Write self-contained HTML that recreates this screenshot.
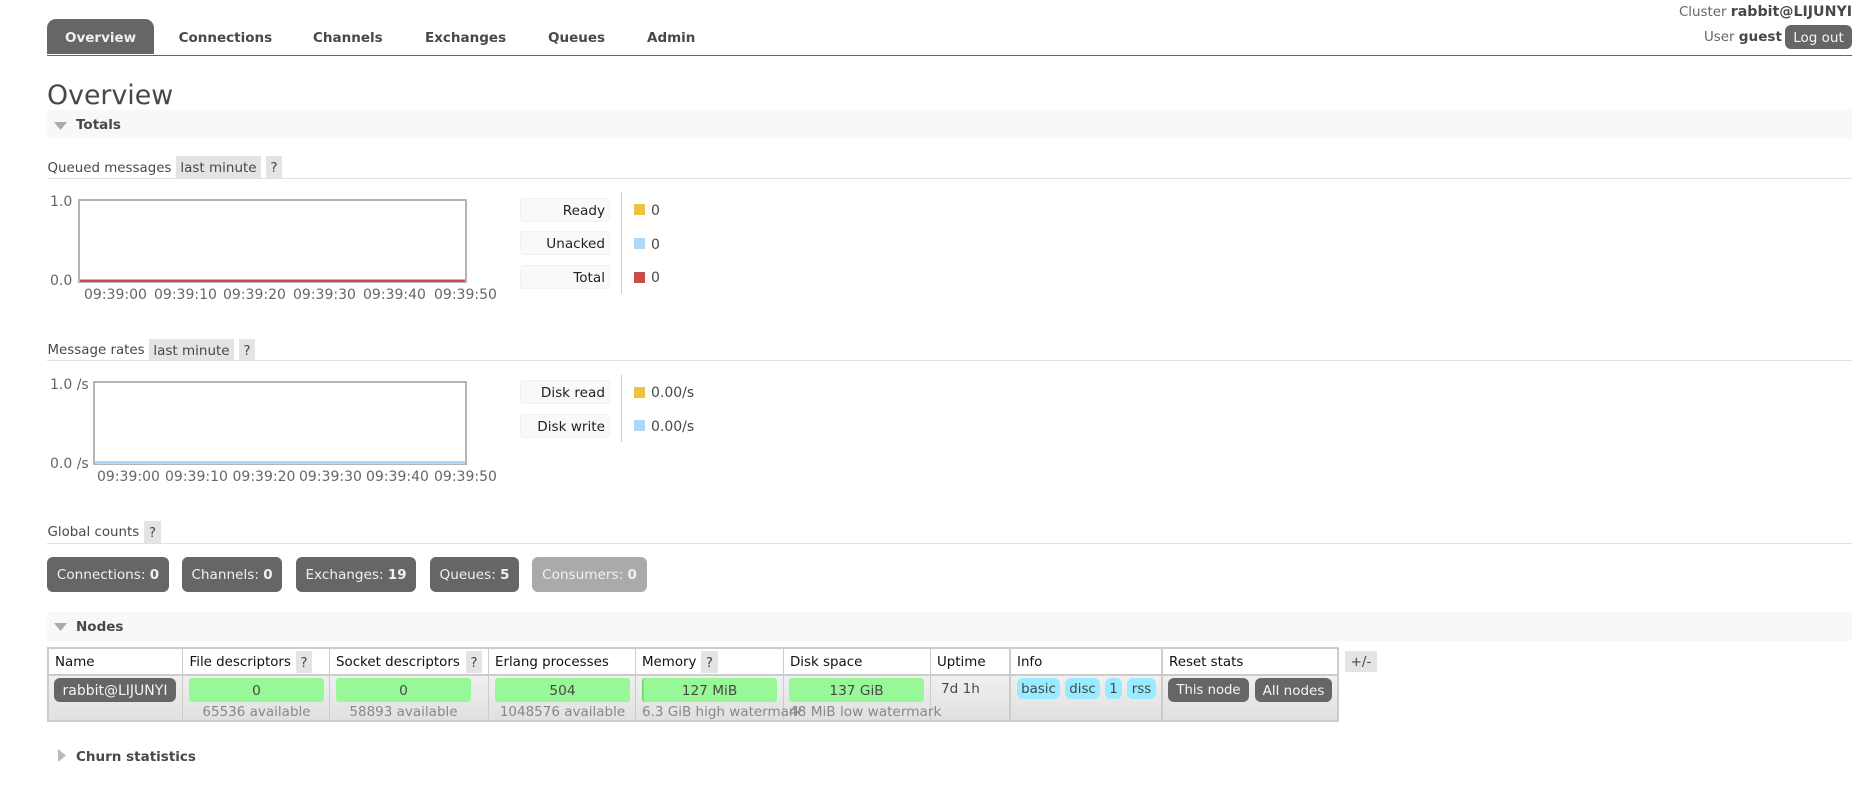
<!DOCTYPE html>
<html><head><meta charset="utf-8"><title>Overview</title>
<style>
html,body{margin:0;padding:0;background:#fff;width:1871px;height:785px;overflow:hidden}
body{position:relative;font-family:"DejaVu Sans","Liberation Sans",sans-serif;font-size:13.4px;color:#484848}
.t,.b,.c{position:absolute;white-space:nowrap}
.t{line-height:22px;height:22px}
.b{font-weight:bold;font-size:13.5px}
.t b{font-weight:bold;font-size:13.4px}
.box{position:absolute}
.chip{background:#e4e4e4;color:#484848;height:22px;line-height:24px;position:absolute;text-align:center;font-size:13.5px}
.leg{position:absolute;left:520px;width:85px;padding-right:5px;height:24px;line-height:26px;text-align:right;background:#f9f9f9;border-radius:3px;box-shadow:inset 0 0 0 1px #f1f1f1;color:#222;font-size:13.6px}
.sw{position:absolute;left:634px;width:11px;height:11px}
.bar{position:absolute;left:47px;width:1805px;background:#f8f8f8}
.btn{position:absolute;background:#666;color:#f4f4f4;border-radius:6px;text-align:center;height:24px;line-height:26px;font-size:13.5px}
.cnt{position:absolute;top:557px;height:35px;line-height:37px;background:#666;color:#f0f0f0;border-radius:6px;text-align:center;font-size:13.6px}
.cnt b{font-size:13.4px}
.grn{position:absolute;top:678px;height:24px;line-height:26px;background:#98f898;border-radius:3px;text-align:center;color:#484848;font-size:13.7px}
.sub{position:absolute;top:701px;line-height:22px;height:22px;color:#888;white-space:nowrap;font-size:13.5px}
.inf{position:absolute;top:678px;height:21px;line-height:23px;background:#99ebff;border-radius:6px;text-align:center;color:#484848;font-size:13.4px}
.sep{position:absolute;top:649px;width:1px;height:71px;background:#ccc}
.hr{position:absolute;left:47px;width:1805px;height:1px;background:#e0e0e0}
.th{position:absolute;top:652px;line-height:22px;height:22px;color:#111;white-space:nowrap;font-size:13.4px}
.tick{position:absolute;line-height:22px;height:22px;color:#666;white-space:nowrap;font-size:14px}
</style></head><body>

<!-- header -->
<div class="box" style="left:47px;top:19px;width:107px;height:35px;background:#666;border-radius:9px 9px 0 0"></div>
<div class="box" style="left:47px;top:55px;width:1805px;height:1px;background:#666"></div>
<div class="t b" style="left:65px;top:27px;color:#f0f0f0">Overview</div>
<div class="t b" style="left:178.6px;top:27px">Connections</div>
<div class="t b" style="left:313px;top:27px">Channels</div>
<div class="t b" style="left:425px;top:27px">Exchanges</div>
<div class="t b" style="left:548px;top:27px">Queues</div>
<div class="t b" style="left:647px;top:27px">Admin</div>

<div class="t" style="right:19px;top:1px;color:#666">Cluster <b style="color:#484848;font-size:14.2px">rabbit@LIJUNYI</b></div>
<div class="t" style="right:89px;top:26px;color:#666">User <b style="color:#484848;font-size:13.6px">guest</b></div>
<div class="btn" style="left:1785px;top:25px;width:67px">Log out</div>

<div class="t" style="left:47px;top:84px;font-size:26.8px;line-height:24px;height:24px">Overview</div>

<!-- totals -->
<div class="bar" style="top:110px;height:28px"></div>
<svg class="box" style="left:54px;top:122px" width="13" height="8"><path d="M0 0H13L6.500 8Z" fill="#aaa"/></svg>
<div class="t b" style="left:76px;top:114px">Totals</div>

<div class="t" style="left:47.5px;top:158px">Queued messages</div>
<div class="chip" style="left:176px;top:156px;width:85px">last minute</div>
<div class="chip" style="left:266px;top:156px;width:16px">?</div>
<div class="hr" style="top:178px"></div>

<div class="box" style="left:78px;top:199px;width:385px;height:80px;border:2px solid #b4b4b4;background:#fff"></div>
<div class="box" style="left:80px;top:279px;width:385px;height:1px;background:#e2a9a9"></div>
<div class="box" style="left:80px;top:280px;width:385px;height:2px;background:#cb4b4b"></div>
<div class="tick" style="left:50px;top:191px">1.0</div>
<div class="tick" style="left:50px;top:270px">0.0</div>
<div class="tick" style="left:84px;top:284px">09:39:00</div>
<div class="tick" style="left:154px;top:284px">09:39:10</div>
<div class="tick" style="left:223px;top:284px">09:39:20</div>
<div class="tick" style="left:293px;top:284px">09:39:30</div>
<div class="tick" style="left:363px;top:284px">09:39:40</div>
<div class="tick" style="left:434px;top:284px">09:39:50</div>

<div class="leg" style="top:198px">Ready</div>
<div class="leg" style="top:231px">Unacked</div>
<div class="leg" style="top:265px">Total</div>
<div class="box" style="left:621px;top:192px;width:1px;height:102px;background:#ccc"></div>
<div class="sw" style="top:204px;background:#edc240"></div>
<div class="sw" style="top:238px;background:#afd8f8"></div>
<div class="sw" style="top:272px;background:#cb4b4b"></div>
<div class="t" style="left:651px;top:200px;font-size:14px">0</div>
<div class="t" style="left:651px;top:234px;font-size:14px">0</div>
<div class="t" style="left:651px;top:267px;font-size:14px">0</div>

<!-- rates -->
<div class="t" style="left:47.5px;top:340px">Message rates</div>
<div class="chip" style="left:149px;top:339px;width:85px">last minute</div>
<div class="chip" style="left:239px;top:339px;width:16px">?</div>
<div class="hr" style="top:360px"></div>

<div class="box" style="left:93px;top:381px;width:370px;height:80px;border:2px solid #b4b4b4;background:#fff"></div>
<div class="box" style="left:95px;top:461px;width:370px;height:3px;background:#afd8f8"></div>
<div class="tick" style="left:50px;top:374px">1.0 /s</div>
<div class="tick" style="left:50px;top:453px">0.0 /s</div>
<div class="tick" style="left:97px;top:466px">09:39:00</div>
<div class="tick" style="left:165px;top:466px">09:39:10</div>
<div class="tick" style="left:232.5px;top:466px">09:39:20</div>
<div class="tick" style="left:299px;top:466px">09:39:30</div>
<div class="tick" style="left:366px;top:466px">09:39:40</div>
<div class="tick" style="left:434px;top:466px">09:39:50</div>

<div class="leg" style="top:380px">Disk read</div>
<div class="leg" style="top:414px">Disk write</div>
<div class="box" style="left:621px;top:375px;width:1px;height:67px;background:#ccc"></div>
<div class="sw" style="top:387px;background:#edc240"></div>
<div class="sw" style="top:420px;background:#afd8f8"></div>
<div class="t" style="left:651px;top:382px;font-size:14px">0.00/s</div>
<div class="t" style="left:651px;top:416px;font-size:14px">0.00/s</div>

<!-- global counts -->
<div class="t" style="left:47.5px;top:522px">Global counts</div>
<div class="chip" style="left:144px;top:521px;width:17px">?</div>
<div class="hr" style="top:543px"></div>

<div class="cnt" style="left:47px;width:122px">Connections: <b>0</b></div>
<div class="cnt" style="left:182px;width:100px">Channels: <b>0</b></div>
<div class="cnt" style="left:296px;width:120px">Exchanges: <b>19</b></div>
<div class="cnt" style="left:430px;width:89px">Queues: <b>5</b></div>
<div class="cnt" style="left:532px;width:115px;background:#aaa">Consumers: <b>0</b></div>

<!-- nodes -->
<div class="bar" style="top:612px;height:29px"></div>
<svg class="box" style="left:54px;top:623px" width="13" height="8"><path d="M0 0H13L6.500 8Z" fill="#aaa"/></svg>
<div class="t b" style="left:76px;top:616px">Nodes</div>

<div class="box" style="left:47px;top:647px;width:1288px;height:71px;border:2px solid #ccc;background:#fff"></div>
<div class="box" style="left:49px;top:674px;width:1288px;height:2px;background:#ccc"></div>
<div class="box" style="left:49px;top:676px;width:1288px;height:44px;background:linear-gradient(#f0f0f0,#e0e0e0)"></div>
<div class="sep" style="left:182px"></div>
<div class="sep" style="left:329px"></div>
<div class="sep" style="left:488px"></div>
<div class="sep" style="left:635px"></div>
<div class="sep" style="left:783px"></div>
<div class="sep" style="left:930px"></div>
<div class="sep" style="left:1009px;width:2px"></div>
<div class="sep" style="left:1161px;width:2px"></div>

<div class="th" style="left:55px">Name</div>
<div class="th" style="left:189.5px">File descriptors</div>
<div class="chip" style="left:296px;top:651px;width:16px">?</div>
<div class="th" style="left:336px">Socket descriptors</div>
<div class="chip" style="left:466px;top:651px;width:16px">?</div>
<div class="th" style="left:495px">Erlang processes</div>
<div class="th" style="left:642px">Memory</div>
<div class="chip" style="left:701px;top:651px;width:17px">?</div>
<div class="th" style="left:790px">Disk space</div>
<div class="th" style="left:937px">Uptime</div>
<div class="th" style="left:1017px">Info</div>
<div class="th" style="left:1169px">Reset stats</div>

<div class="btn" style="left:54px;top:678px;width:122px;font-size:14px">rabbit@LIJUNYI</div>
<div class="grn" style="left:189px;width:135px">0</div>
<div class="grn" style="left:336px;width:135px">0</div>
<div class="grn" style="left:495px;width:135px">504</div>
<div class="grn" style="left:642px;width:135px;box-shadow:inset 1.5px 0 0 #6fd06f">127 MiB</div>
<div class="grn" style="left:789px;width:135px">137 GiB</div>
<div class="sub" style="left:189px;width:135px;text-align:center">65536 available</div>
<div class="sub" style="left:336px;width:135px;text-align:center">58893 available</div>
<div class="sub" style="left:495px;width:135px;text-align:center">1048576 available</div>
<div class="sub" style="left:642px">6.3 GiB high watermark</div>
<div class="sub" style="left:789px;font-size:13.65px">48 MiB low watermark</div>
<div class="t" style="left:941px;top:678px;font-size:13.6px">7d 1h</div>
<div class="inf" style="left:1017px;width:43px">basic</div>
<div class="inf" style="left:1065px;width:35px">disc</div>
<div class="inf" style="left:1105px;width:17px">1</div>
<div class="inf" style="left:1127px;width:29px">rss</div>
<div class="btn" style="left:1168px;top:678px;width:81px;font-size:13.2px">This node</div>
<div class="btn" style="left:1255px;top:678px;width:77px">All nodes</div>
<div class="chip" style="left:1345px;top:651px;width:32px;height:21px;line-height:23px">+/-</div>

<svg class="box" style="left:58px;top:749px" width="8" height="13"><path d="M0 0V13L8 6.500Z" fill="#bbb"/></svg>
<div class="t b" style="left:76px;top:746px">Churn statistics</div>
</body></html>
